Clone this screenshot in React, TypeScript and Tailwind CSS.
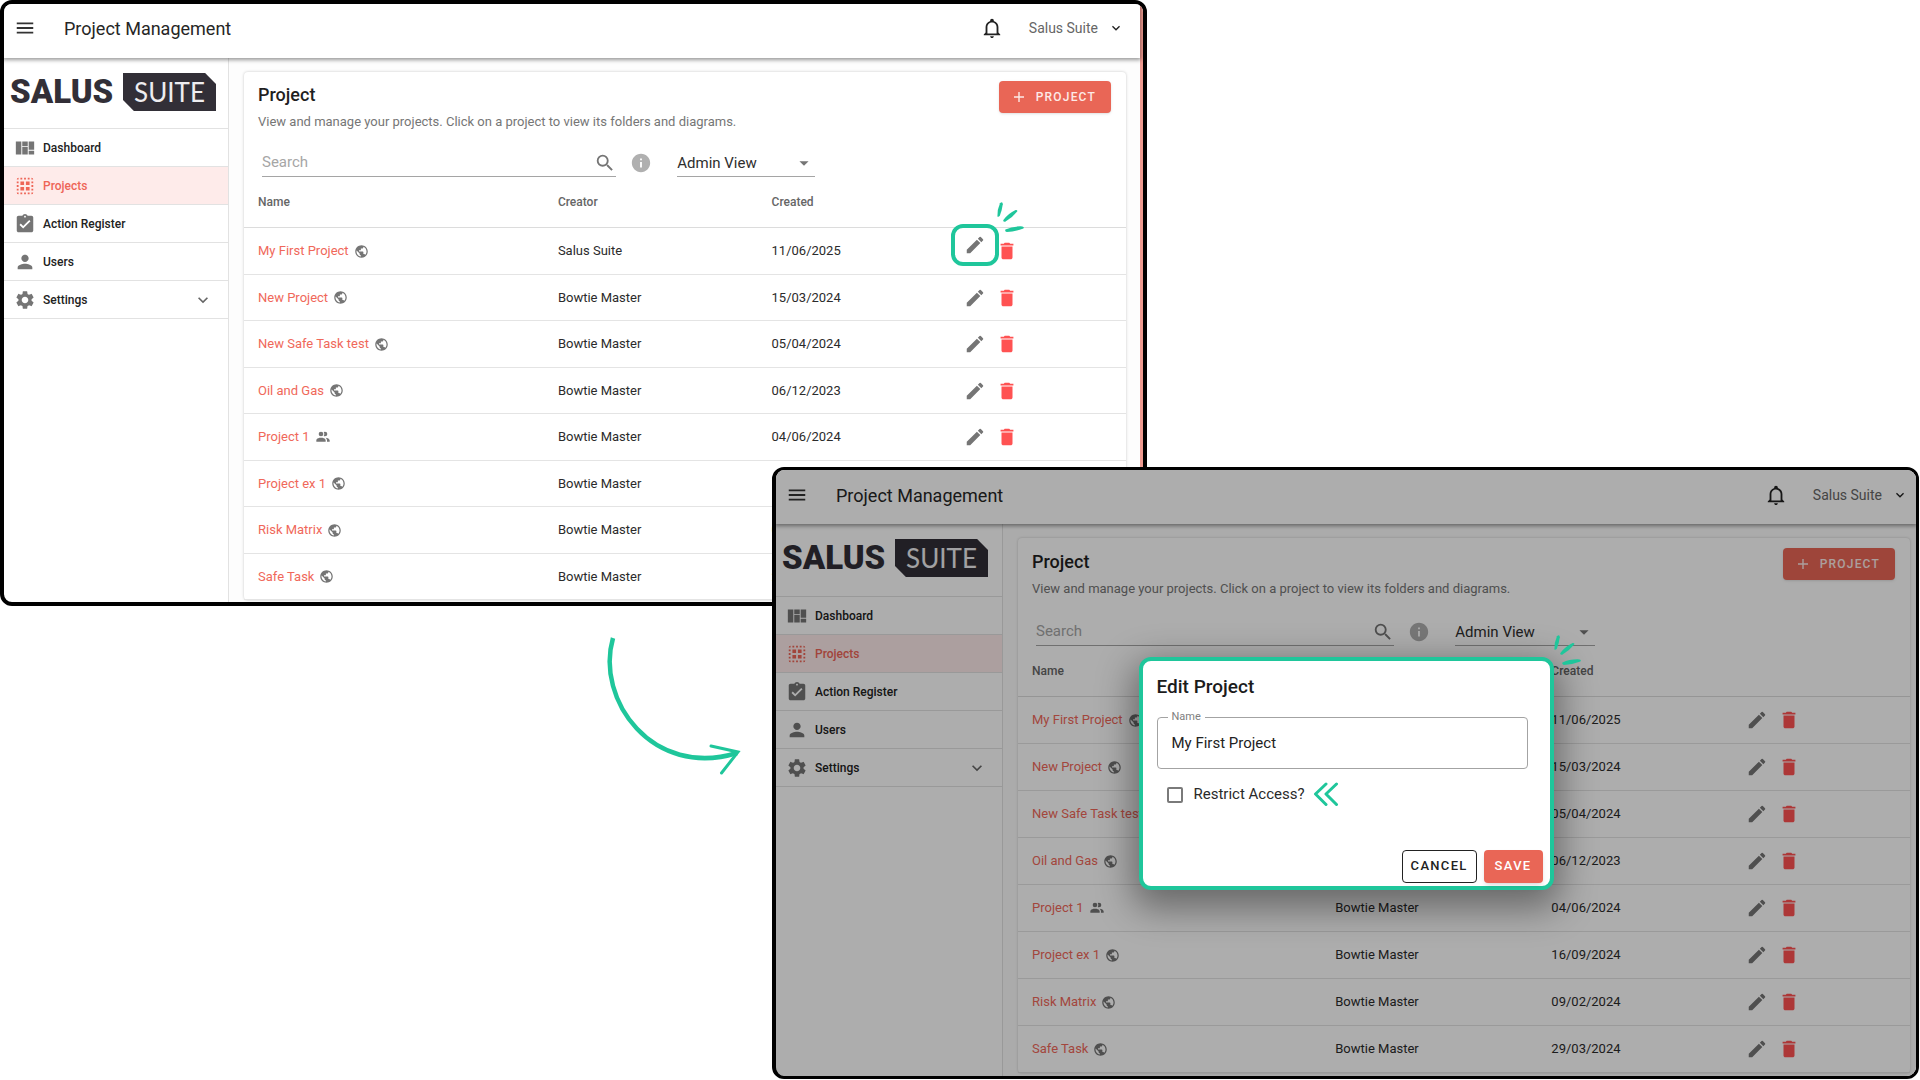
import { useId, useState } from "react";
import type { ReactNode } from "react";
import {
  MdArrowDropDown,
  MdAssignmentTurnedIn,
  MdDelete,
  MdEdit,
  MdExpandMore,
  MdInfo,
  MdMenu,
  MdPerson,
  MdPublic,
  MdSearch,
  MdSettings,
} from "react-icons/md";

type Project = {
  name: string;
  creator: string;
  created: string;
  shared?: boolean;
};

const projects: Project[] = [
  { name: "My First Project", creator: "Salus Suite", created: "11/06/2025" },
  { name: "New Project", creator: "Bowtie Master", created: "15/03/2024" },
  { name: "New Safe Task test", creator: "Bowtie Master", created: "05/04/2024" },
  { name: "Oil and Gas", creator: "Bowtie Master", created: "06/12/2023" },
  { name: "Project 1", creator: "Bowtie Master", created: "04/06/2024", shared: true },
  { name: "Project ex 1", creator: "Bowtie Master", created: "16/09/2024" },
  { name: "Risk Matrix", creator: "Bowtie Master", created: "09/02/2024" },
  { name: "Safe Task", creator: "Bowtie Master", created: "29/03/2024" },
];

function PathIcon({ d, size }: { d: string; size: number }) {
  return (
    <svg viewBox="0 0 24 24" width={size} height={size} fill="currentColor" aria-hidden="true">
      <path d={d} />
    </svg>
  );
}

const bellPath =
  "M10 21H14C14 22.1 13.1 23 12 23S10 22.1 10 21M21 19V20H3V19L5 17V11C5 7.9 7.03 5.17 10 4.29C10 4.19 10 4.1 10 4C10 2.9 10.9 2 12 2S14 2.9 14 4C14 4.1 14 4.19 14 4.29C16.97 5.17 19 7.9 19 11V17L21 19M17 11C17 8.24 14.76 6 12 6S7 8.24 7 11V18H17V11Z";
const dashboardPath =
  "M2 5V19H8V5H2M9 5V10H15V5H9M16 5V14H22V5H16M9 11V19H15V11H9M16 15V19H22V15H16Z";
const selectGroupPath =
  "M5 3A2 2 0 0 0 3 5H5M7 3V5H9V3M11 3V5H13V3M15 3V5H17V3M19 3V5H21A2 2 0 0 0 19 3M3 7V9H5V7M7 7V11H11V7M13 7V11H17V7M19 7V9H21V7M3 11V13H5V11M19 11V13H21V11M7 13V17H11V13M13 13V17H17V13M3 15V17H5V15M19 15V17H21V15M3 19A2 2 0 0 0 5 21V19M7 19V21H9V19M11 19V21H13V19M15 19V21H17V19M19 19V21A2 2 0 0 0 21 19Z";
const peoplePath =
  "M16 17V19H2V17S2 13 9 13 16 17 16 17M12.5 7.5A3.5 3.5 0 1 0 9 11A3.5 3.5 0 0 0 12.5 7.5M15.94 13A5.32 5.32 0 0 1 18 17V19H22V17S22 13.37 15.94 13M15 4A3.39 3.39 0 0 0 13.07 4.59A5 5 0 0 1 13.07 10.41A3.39 3.39 0 0 0 15 11A3.5 3.5 0 0 0 15 4Z";

function Sparks({ className }: { className: string }) {
  return (
    <svg
      viewBox="0 0 32 34"
      className={`pointer-events-none absolute h-[34px] w-8 ${className}`}
      fill="#1fc69b"
      aria-hidden="true"
    >
      <path d="M6.2 2.2Q8 2.3 7.8 4.2Q7 10.5 4.8 15.8Q3.6 17.4 2.4 16.6Q1.9 10 5 3.2Z" />
      <path d="M8.2 20.2Q13 13.5 20.6 10Q22.4 9.8 22.4 11.2Q17 18 10.2 21.8Q8.2 22.2 8.2 20.2Z" />
      <path d="M10.4 29.6Q18 26 27.4 26.4Q29.6 27 28.4 28.4Q20 31.6 11.8 32Q9.6 31.4 10.4 29.6Z" />
    </svg>
  );
}

function Logo() {
  return (
    <div className="flex items-center gap-3 text-[#322f37]">
      <span className="w-[101px] text-center text-[33px] leading-[38px] font-black">SALUS</span>
      <span className="relative flex h-[38px] w-[93px] items-center justify-center">
        <svg
          viewBox="0 0 94 38"
          preserveAspectRatio="none"
          className="absolute inset-0 size-full"
          fill="currentColor"
          aria-hidden="true"
        >
          <path d="M0 0H83L94 11V38H11L0 27Z" />
        </svg>
        <span className="relative font-['Lato',sans-serif] text-[26px] leading-[38px] text-[#eeedf0]">
          SUITE
        </span>
      </span>
    </div>
  );
}

function NavItem({
  icon,
  label,
  active,
  expandable,
}: {
  icon: ReactNode;
  label: string;
  active?: boolean;
  expandable?: boolean;
}) {
  return (
    <li className={`border-b border-[#e2e2e2] ${active ? "bg-[#feebea] text-[#ee6557]" : "text-[#222]"}`}>
      <a href="#" className="flex h-[37px] items-center pr-[15px] pl-2.5 text-[12px] font-medium">
        <span className={`mr-[7px] ${active ? "text-[#ee6557]" : "text-[#757575]"}`}>{icon}</span>
        <span className="flex-1">{label}</span>
        {expandable && <MdExpandMore size={20} className="text-[#666]" />}
      </a>
    </li>
  );
}

function Sidebar({ wide }: { wide: boolean }) {
  return (
    <nav className={`shrink-0 border-r border-[#e2e2e2] ${wide ? "w-[227px]" : "w-[225px]"}`}>
      <div className={`flex items-start border-b border-[#e2e2e2] pl-1.5 pt-[15px] ${wide ? "h-[73px]" : "h-[71px]"}`}>
        <Logo />
      </div>
      <ul>
        <NavItem icon={<PathIcon d={dashboardPath} size={22} />} label="Dashboard" />
        <NavItem icon={<PathIcon d={selectGroupPath} size={22} />} label="Projects" active />
        <NavItem icon={<MdAssignmentTurnedIn size={22} />} label="Action Register" />
        <NavItem icon={<MdPerson size={22} />} label="Users" />
        <NavItem icon={<MdSettings size={22} />} label="Settings" expandable />
      </ul>
    </nav>
  );
}

function EditButton({ name, highlighted }: { name: string; highlighted: boolean }) {
  return (
    <button type="button" aria-label={`Edit ${name}`} className="relative text-[#757575]">
      <MdEdit size={22} />
      {highlighted && (
        <>
          <span className="absolute -top-4 -left-[13px] flex h-[42px] w-12 items-center justify-center rounded-xl border-4 border-[#1fc69b] bg-white">
            <MdEdit size={22} />
          </span>
          <Sparks className="-top-10 left-[31px]" />
        </>
      )}
    </button>
  );
}

function ProjectTable({ wide, highlightFirst }: { wide: boolean; highlightFirst: boolean }) {
  return (
    <table className="w-full table-fixed border-separate border-spacing-0 text-left text-[13px]">
      <colgroup>
        <col className="w-[34%]" />
        <col className="w-[24%]" />
        <col className="w-[22%]" />
        <col className="w-[20%]" />
      </colgroup>
      <thead>
        <tr className="text-[12px] text-[#666]">
          <th className="h-[51px] border-b border-[#dcdcdc] px-3.5 font-medium">Name</th>
          <th className="border-b border-[#dcdcdc] px-3.5 font-medium">Creator</th>
          <th className="border-b border-[#dcdcdc] px-4 font-medium">Created</th>
          <th className="border-b border-[#dcdcdc] px-3.5" aria-label="Actions" />
        </tr>
      </thead>
      <tbody>
        {projects.map((p, i) => (
          <tr key={p.name} className={wide ? "h-[47px]" : "h-[47px] even:h-[46px]"}>
            <td className="border-b border-[#e4e4e4] px-3.5 text-[#f0685a]">
              <span className="flex items-center gap-[5px]">
                <a href="#">{p.name}</a>
                <span className="text-[#757575]">
                  {p.shared ? <PathIcon d={peoplePath} size={16} /> : <MdPublic size={15} />}
                </span>
              </span>
            </td>
            <td className="border-b border-[#e4e4e4] px-3.5 text-[#2b2b2b]">{p.creator}</td>
            <td className="border-b border-[#e4e4e4] px-4 text-[#2b2b2b]">{p.created}</td>
            <td className="border-b border-[#e4e4e4] px-3.5">
              <span className="flex items-center gap-2.5">
                <EditButton name={p.name} highlighted={highlightFirst && i === 0} />
                <button type="button" aria-label={`Delete ${p.name}`} className="text-[#ff5252]">
                  <MdDelete size={22} />
                </button>
              </span>
            </td>
          </tr>
        ))}
      </tbody>
    </table>
  );
}

function ProjectCard({ wide, highlightFirst }: { wide: boolean; highlightFirst: boolean }) {
  return (
    <section className="rounded-sm bg-white pt-2 shadow-[0_0_3px_rgba(0,0,0,0.22)]">
      <div className="flex items-start justify-between pr-[15px] pl-3.5">
        <div className={wide ? "pt-1" : "pt-[3px]"}>
          <h2 className="text-[18px] leading-6 font-medium text-[#1f1f1f]">Project</h2>
          <p className="mt-[5px] text-[13px] leading-5 text-[#767676]">
            View and manage your projects. Click on a project to view its folders and diagrams.
          </p>
        </div>
        <button
          type="button"
          className={`flex h-8 items-center gap-3 rounded bg-[#e96656] px-[15px] text-[12px] font-medium tracking-widest text-[#fdeae7] shadow-sm ${
            wide ? "mt-0.5" : "mt-px"
          }`}
        >
          <svg viewBox="0 0 10 10" className="size-2.5" stroke="currentColor" strokeWidth="1.4" aria-hidden="true">
            <path d="M5 0V10M0 5H10" />
          </svg>
          PROJECT
        </button>
      </div>
      <div className={`flex items-stretch pl-[18px] ${wide ? "mt-[15px]" : "mt-[13px]"}`}>
        <div className="flex h-8 w-[41%] items-center border-b border-[#a5a5a5] pt-1">
          <input
            type="text"
            aria-label="Search projects"
            placeholder="Search"
            className="min-w-0 flex-1 text-[15px] outline-none placeholder:text-[#a6a6a6]"
          />
          <MdSearch size={22} className="text-[#757575]" />
        </div>
        <div className="flex w-[61px] items-center pt-1 pl-3.5">
          <MdInfo size={22} className="text-[#b0b0b0]" />
        </div>
        <div className="relative flex w-[16%] items-center border-b border-[#a5a5a5] pt-1">
          <select
            aria-label="View"
            className="w-full appearance-none text-[15px] leading-6 text-[#2e2e2e] outline-none"
          >
            <option>Admin View</option>
          </select>
          <MdArrowDropDown size={22} className="pointer-events-none absolute right-0 text-[#757575]" />
        </div>
      </div>
      <ProjectTable wide={wide} highlightFirst={highlightFirst} />
    </section>
  );
}

function AppScreen({ wide = false, highlightFirst = false }: { wide?: boolean; highlightFirst?: boolean }) {
  return (
    <div className="flex min-w-0 flex-1 flex-col">
      <header
        className={`relative flex h-[54px] shrink-0 items-center bg-white pl-2.5 shadow-[0_1px_4px_1px_rgba(0,0,0,0.4)] ${
          wide ? "pr-2 pb-1" : "pr-4 pb-1.5"
        }`}
      >
        <button type="button" aria-label="Menu" className="text-[#333]">
          <MdMenu size={22} />
        </button>
        <h1 className="ml-7 flex-1 text-[18px] text-[#262626]">Project Management</h1>
        <button type="button" aria-label="Notifications" className="text-[#222]">
          <PathIcon d={bellPath} size={22} />
        </button>
        <button type="button" className="ml-[26px] flex items-center gap-2.5 text-[14px] text-[#666]">
          Salus Suite
          <MdExpandMore size={16} className="text-[#222]" />
        </button>
      </header>
      <div className="flex flex-1">
        <Sidebar wide={wide} />
        <main className={`min-w-0 flex-1 bg-[#fdfdfd] pt-3.5 pl-[15px] ${wide ? "pr-1.5" : "pr-3.5"}`}>
          <ProjectCard wide={wide} highlightFirst={highlightFirst} />
        </main>
      </div>
    </div>
  );
}

function EditDialog() {
  const nameId = useId();
  const [name, setName] = useState("My First Project");
  const [restricted, setRestricted] = useState(false);
  return (
    <form
      role="dialog"
      aria-label="Edit Project"
      className="relative w-[415px] rounded-xl border-4 border-[#1fc69b] bg-white pt-3.5 pb-[3px] pl-3.5 shadow-[0_12px_36px_6px_rgba(0,0,0,0.4)]"
    >
      <Sparks className="-top-7 -right-[34px]" />
      <h2 className="text-[19px] leading-6 font-medium text-[#1c1c1c]">Edit Project</h2>
      <div className="relative mt-[18px] mr-[22px]">
        <label htmlFor={nameId} className="absolute -top-2 left-[11px] bg-white px-1 text-[11px] leading-4 text-[#808080]">
          Name
        </label>
        <input
          id={nameId}
          type="text"
          value={name}
          onChange={(e) => setName(e.target.value)}
          className="h-[52px] w-full rounded border border-[#a3a3a3] px-3.5 text-[15px] text-[#222] outline-none"
        />
      </div>
      <div className="mt-3 flex h-6 items-center pt-1 pl-2.5">
        <label className="flex items-center gap-[11px] text-[15px] text-[#2a2a2a]">
          <input
            type="checkbox"
            checked={restricted}
            onChange={(e) => setRestricted(e.target.checked)}
            className="size-4 appearance-none rounded-xs border-2 border-[#7a7a7a] checked:bg-[#e96656]"
          />
          Restrict Access?
        </label>
        <svg
          viewBox="0 0 26 26"
          className="ml-2 size-[26px]"
          fill="none"
          stroke="#1fc69b"
          strokeWidth="3"
          strokeLinecap="round"
          strokeLinejoin="round"
          aria-hidden="true"
        >
          <path d="M13 2L2.5 12L13 22.5M23.500 2L13 12L23.500 22.5" />
        </svg>
      </div>
      <div className="mt-[45px] flex justify-end gap-[7px] pr-[7px] text-[13px] font-medium tracking-widest">
        <button type="button" className="h-[33px] rounded border border-[#222] px-2 text-[#222]">
          CANCEL
        </button>
        <button type="button" className="h-[33px] rounded bg-[#e96656] px-[11px] text-white shadow-md">
          SAVE
        </button>
      </div>
    </form>
  );
}

export default function App() {
  return (
    <div className="relative min-h-screen w-full overflow-hidden bg-white font-['Roboto',sans-serif]">
      <div className="absolute top-0 right-[773px] left-0 flex h-[606px] overflow-hidden rounded-xl border-4 border-black bg-white">
        <AppScreen highlightFirst />
        <div className="w-[3px] shrink-0 bg-[#ee9a90]" />
      </div>

      <svg
        viewBox="0 0 140 150"
        className="absolute top-[630px] left-[603px] h-[150px] w-[140px]"
        fill="none"
        stroke="#1fc69b"
        aria-hidden="true"
      >
        <path d="M10 8C-8 70 50 149 134 123" strokeWidth="4.500" />
        <path d="M108 116L135 122L118.500 143" strokeWidth="3" strokeLinecap="round" />
      </svg>

      <div className="absolute top-[467px] right-px bottom-px left-[772px] flex overflow-hidden rounded-xl border-[3px] border-l-4 border-black bg-white">
        <AppScreen wide />
        <div className="absolute inset-0 flex items-center justify-center bg-black/32">
          <EditDialog />
        </div>
      </div>
    </div>
  );
}
